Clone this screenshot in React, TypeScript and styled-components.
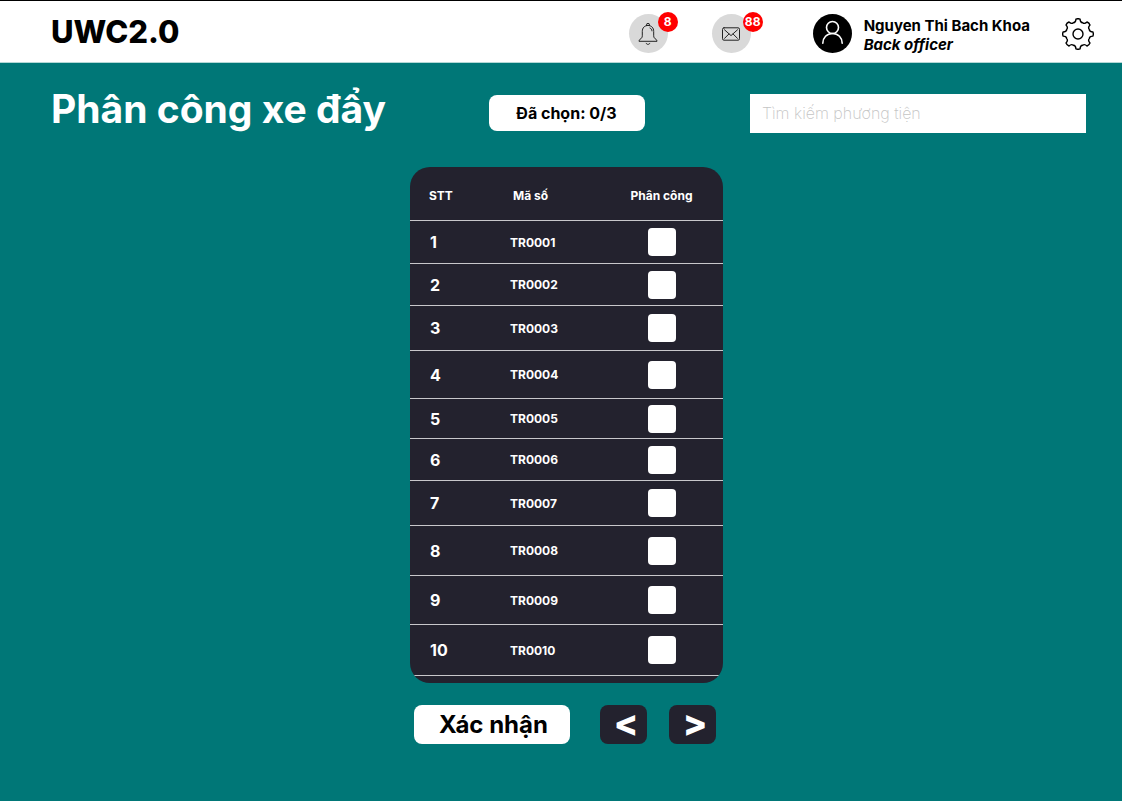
import React, { useState } from "react";
import styled, { createGlobalStyle } from "styled-components";

const GlobalStyle = createGlobalStyle`
  *, *::before, *::after { box-sizing: border-box; }
  body {
    margin: 0;
    background: #007777;
    font-family: Inter, "Noto Sans", sans-serif;
    color: #000;
  }
  button, input { font-family: inherit; }
`;

const TopBar = styled.header`
  display: flex;
  align-items: center;
  justify-content: space-between;
  height: 63px;
  padding: 4px 28px 0 51px;
  background: #fff;
  border-top: 1px solid #000;
  border-bottom: 1px solid #b4d8d6;
`;

const Logo = styled.a`
  padding-bottom: 4px;
  color: #000;
  font-size: 31px;
  font-weight: 800;
  line-height: 40px;
  text-decoration: none;
`;

const Actions = styled.div`
  display: flex;
  align-items: center;
`;

const Alerts = styled.div`
  display: flex;
  gap: 44px;
  margin-right: 62px;
`;

const RoundButton = styled.button`
  position: relative;
  display: grid;
  place-items: center;
  width: 39px;
  height: 39px;
  padding: 0;
  border: 0;
  border-radius: 50%;
  background: #d9d9d9;
  cursor: pointer;
`;

const Badge = styled.span<{ $wide?: boolean }>`
  position: absolute;
  top: -2px;
  right: ${(p) => (p.$wide ? -12 : -10)}px;
  width: 20px;
  height: 20px;
  border-radius: 50%;
  background: #f00;
  color: #fff;
  font-size: 12px;
  font-weight: 700;
  line-height: 20px;
  text-align: center;
`;

const Profile = styled.div`
  display: flex;
  align-items: center;
  gap: 12px;
  margin-right: 32px;
`;

const ProfileText = styled.div`
  padding-top: 2px;
  font-size: 15px;
  font-weight: 700;
  line-height: 19px;
`;

const Role = styled.div`
  font-style: italic;
`;

const PlainButton = styled.button`
  display: grid;
  padding: 0;
  border: 0;
  background: none;
  cursor: pointer;
`;

const Main = styled.main`
  padding: 25px 36px 56px 47px;
`;

const Toolbar = styled.div`
  display: grid;
  grid-template-columns: 1fr auto 1fr;
  align-items: center;
  margin-bottom: 29px;
`;

const Title = styled.h1`
  margin: 0;
  padding: 0 0 8px 4px;
  color: #fff;
  font-size: 39px;
  font-weight: 700;
  line-height: 42px;
  white-space: nowrap;
`;

const Counter = styled.output`
  width: 156px;
  border-radius: 8px;
  background: #fff;
  font-size: 16px;
  font-weight: 700;
  line-height: 36px;
  text-align: center;
`;

const Search = styled.input`
  justify-self: end;
  width: 336px;
  height: 39px;
  padding: 0 12px;
  border: 0;
  border-radius: 0;
  background: #fff;
  font-size: 16px;
  font-weight: 200;
  &::placeholder { color: #c4c4c4; opacity: 1; }
`;

const Panel = styled.section`
  width: 313px;
  margin: 0 auto 22px;
  padding-bottom: 7px;
  border-radius: 20px;
  background: #23222e;
  overflow: hidden;
`;

const Table = styled.table`
  width: 100%;
  table-layout: fixed;
  border-collapse: separate;
  border-spacing: 0;
  color: #fff;
  font-size: 12px;
  font-weight: 700;
`;

const Row = styled.tr<{ $height: number }>`
  height: ${(p) => p.$height}px;
`;

const HeadCell = styled.th<{ $width: number; $indent?: number }>`
  width: ${(p) => p.$width}px;
  padding: 4px 0 0 ${(p) => p.$indent ?? 0}px;
  border-bottom: 1px solid #c8c8cb;
  font-weight: 700;
  text-align: ${(p) => (p.$indent ? "left" : "center")};
`;

const Cell = styled.td`
  padding: 0;
  border-bottom: 1px solid #c8c8cb;
`;

const NumberCell = styled(Cell)`
  padding-left: 20px;
  font-size: 16px;
`;

const CheckCell = styled(Cell)`
  text-align: center;
`;

const Check = styled.input`
  appearance: none;
  display: block;
  width: 28px;
  height: 28px;
  margin: 0 auto;
  border-radius: 4px;
  background: #fff;
  cursor: pointer;
  &:checked { background: #007777; border: 4px solid #fff; }
`;

const Footer = styled.div`
  display: flex;
  justify-content: center;
  padding-right: 4px;
`;

const Confirm = styled.button`
  width: 156px;
  height: 39px;
  margin-right: 30px;
  padding: 0 0 0 4px;
  border: 0;
  border-radius: 8px;
  background: #fff;
  color: #000;
  font-size: 24px;
  font-weight: 700;
  cursor: pointer;
`;

const Pager = styled.nav`
  display: flex;
  gap: 22px;
`;

const PageButton = styled.button`
  width: 47px;
  height: 39px;
  padding: 0 0 2px 6px;
  border: 0;
  border-radius: 8px;
  background: #23222e;
  color: #fff;
  font-size: 36px;
  font-weight: 800;
  line-height: 37px;
  cursor: pointer;
`;

const carts = [
  { code: "TR0001", height: 43 },
  { code: "TR0002", height: 42 },
  { code: "TR0003", height: 45 },
  { code: "TR0004", height: 48 },
  { code: "TR0005", height: 40 },
  { code: "TR0006", height: 42 },
  { code: "TR0007", height: 45 },
  { code: "TR0008", height: 50 },
  { code: "TR0009", height: 49 },
  { code: "TR0010", height: 51 },
];

const LIMIT = 3;

const BellIcon = () => (
  <svg width="20" height="22" viewBox="0 0 20 22" fill="none" stroke="#222" strokeWidth="1" strokeLinecap="round" strokeLinejoin="round">
    <path d="M8.500 2.600V1.800a1.500 1.500 0 0 1 3 0v.8M10 2.400c-3.600 0-5.700 2.600-5.700 6v4.400c0 1.700-.9 2.700-2.300 3.600-.8.500-1 .9-1 1.900h18c0-1-.2-1.400-1-1.900-1.400-.9-2.300-1.900-2.300-3.600V8.400c0-3.400-2.100-6-5.700-6zM8.200 20.300c.3.700 1 1.100 1.800 1.100s1.500-.4 1.800-1.100M12 5c1.200.5 1.900 1.500 2 2.900" />
  </svg>
);

const MailIcon = () => (
  <svg width="18" height="14" viewBox="0 0 18 14" fill="none" stroke="#222" strokeWidth="1" strokeLinecap="round" strokeLinejoin="round">
    <rect x=".5" y=".8" width="17" height="12.400" rx="1.500" />
    <path d="M2.500 2.800 9 8.600l6.500-5.800M2.500 11.400l4.400-4.400M15.500 11.400 11.100 7" />
  </svg>
);

const AvatarIcon = () => (
  <svg width="39" height="39" viewBox="0 0 39 39" fill="none" stroke="#fff" strokeWidth="1.600" strokeLinecap="round">
    <circle cx="19.500" cy="19.500" r="19.500" fill="#000" stroke="none" />
    <circle cx="19.500" cy="13.500" r="6" />
    <path d="M9.800 29.300c0-5.600 4.100-9.800 9.700-9.800s9.700 4.200 9.700 9.800" />
  </svg>
);

/* Outline of an eight-toothed gear centred on (16, 16). */
const polar = (degrees: number, radius: number) => {
  const a = (degrees * Math.PI) / 180;
  return `${(16 + radius * Math.sin(a)).toFixed(2)} ${(16 - radius * Math.cos(a)).toFixed(2)}`;
};

const gearPath =
  Array.from({ length: 8 }, (_, i) => {
    const a = i * 45;
    return [
      `${i ? "L" : "M"}${polar(a - 8, 15)}`,
      `Q${polar(a, 15.8)} ${polar(a + 8, 15)}`,
      `C${polar(a + 10, 12.4)} ${polar(a + 15, 11.8)} ${polar(a + 22.5, 12.2)}`,
      `C${polar(a + 30, 11.8)} ${polar(a + 35, 12.4)} ${polar(a + 37, 15)}`,
    ].join("");
  }).join("") + "Z";

const GearIcon = () => (
  <svg width="32" height="32" viewBox="0 0 32 32" fill="none" stroke="#000" strokeWidth="1.400" strokeLinejoin="round">
    <circle cx="16" cy="16" r="5" />
    <path d={gearPath} />
  </svg>
);

export default function App() {
  const [selected, setSelected] = useState<string[]>([]);
  const toggle = (code: string) =>
    setSelected((now) =>
      now.includes(code) ? now.filter((c) => c !== code) : now.length < LIMIT ? [...now, code] : now
    );

  return (
    <>
      <GlobalStyle />
      <TopBar>
        <Logo href="#">UWC2.0</Logo>
        <Actions>
          <Alerts>
            <RoundButton type="button" aria-label="Thông báo">
              <BellIcon />
              <Badge>8</Badge>
            </RoundButton>
            <RoundButton type="button" aria-label="Tin nhắn">
              <MailIcon />
              <Badge $wide>88</Badge>
            </RoundButton>
          </Alerts>
          <Profile>
            <AvatarIcon />
            <ProfileText>
              Nguyen Thi Bach Khoa
              <Role>Back officer</Role>
            </ProfileText>
          </Profile>
          <PlainButton type="button" aria-label="Cài đặt">
            <GearIcon />
          </PlainButton>
        </Actions>
      </TopBar>
      <Main>
        <Toolbar>
          <Title>Phân công xe đẩy</Title>
          <Counter>Đã chọn: {selected.length}/{LIMIT}</Counter>
          <Search type="search" aria-label="Tìm kiếm phương tiện" placeholder="Tìm kiếm phương tiện" />
        </Toolbar>
        <Panel>
          <Table>
            <thead>
              <Row $height={54}>
                <HeadCell scope="col" $width={100} $indent={19}>STT</HeadCell>
                <HeadCell scope="col" $width={90} $indent={3}>Mã số</HeadCell>
                <HeadCell scope="col" $width={123}>Phân công</HeadCell>
              </Row>
            </thead>
            <tbody>
              {carts.map(({ code, height }, i) => (
                <Row key={code} $height={height}>
                  <NumberCell>{i + 1}</NumberCell>
                  <Cell>{code}</Cell>
                  <CheckCell>
                    <Check
                      type="checkbox"
                      aria-label={`Phân công ${code}`}
                      checked={selected.includes(code)}
                      onChange={() => toggle(code)}
                    />
                  </CheckCell>
                </Row>
              ))}
            </tbody>
          </Table>
        </Panel>
        <Footer>
          <Confirm type="button">Xác nhận</Confirm>
          <Pager aria-label="Phân trang">
            <PageButton type="button" aria-label="Trang trước">&lt;</PageButton>
            <PageButton type="button" aria-label="Trang sau">&gt;</PageButton>
          </Pager>
        </Footer>
      </Main>
    </>
  );
}
